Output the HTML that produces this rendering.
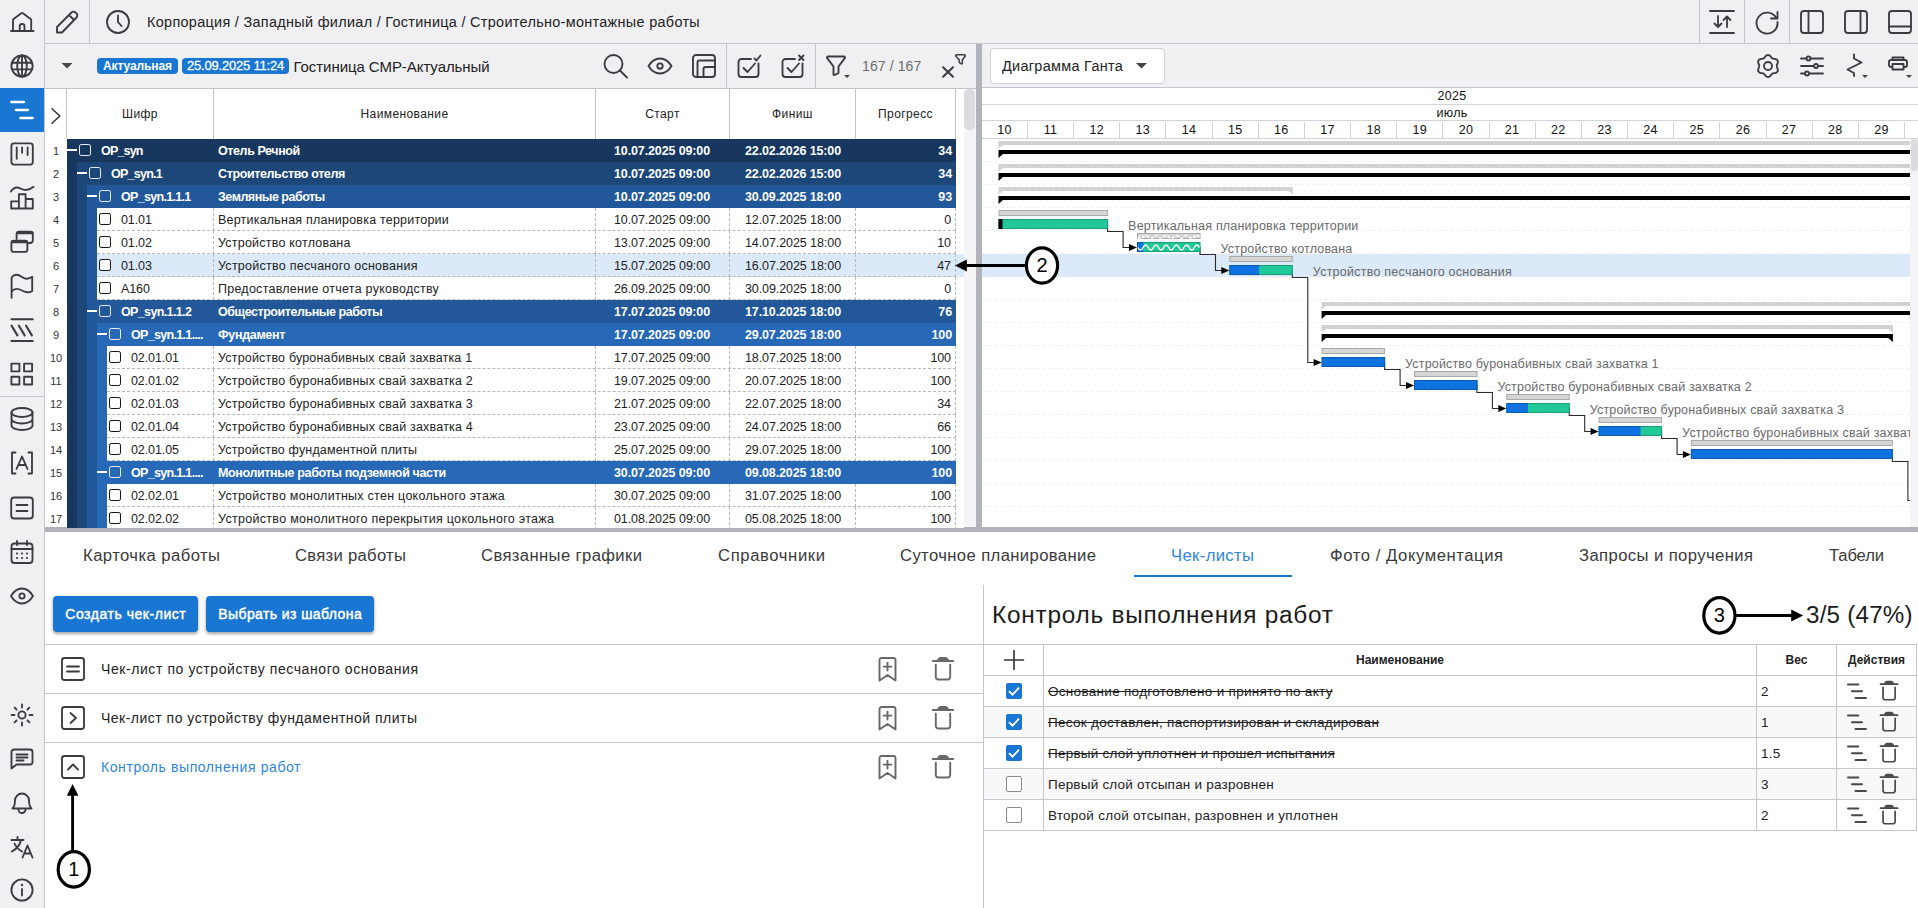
<!DOCTYPE html>
<html lang="ru"><head><meta charset="utf-8"><title>Gantt</title><style>
*{box-sizing:border-box}
html,body{margin:0;padding:0}
body{width:1918px;height:908px;overflow:hidden;background:#fff;font-family:"Liberation Sans",sans-serif;color:#222;position:relative}
.abs{position:absolute}
.t{position:absolute;white-space:nowrap;line-height:1}
svg{position:absolute;overflow:visible}
.ic{fill:none;stroke:#3b3b40;stroke-width:1.85;stroke-linecap:round;stroke-linejoin:round}

.gh{position:absolute;top:89px;height:50px;background:#fff;border-right:1px solid #c4c4cc;font-size:12px;letter-spacing:.4px;color:#222;text-align:center;line-height:51px}
.gr{position:absolute;left:45px;width:919px;height:23px}
.gr .t{top:0;line-height:24px}
.rn{position:absolute;left:0;width:22px;text-align:center;font-size:11px;color:#333;line-height:25px;top:0}
.st{font-weight:700;color:#fff;font-size:12.5px;letter-spacing:-.38px}
.tt{font-size:12.5px;letter-spacing:.2px;color:#222}
.cd{font-size:12.5px;letter-spacing:-.1px;color:#222}
.dt{font-size:12.5px;letter-spacing:-.08px;color:#222}
.dtb{font-weight:700;color:#fff;font-size:12.5px;letter-spacing:-.13px}
.cb{position:absolute;top:4.500px;width:12px;height:12px;border:1.600px solid #151515;border-radius:2.200px;background:#fff}
.cbw{position:absolute;top:5px;width:12px;height:12px;border:1.500px solid #e8edf5;border-radius:2.200px}
.mn{position:absolute;top:9.500px;width:10px;height:2px;background:#fff}
.vd{position:absolute;top:0;width:0;height:23px;border-left:1px dashed #b9b9b9}

.gl{position:absolute;white-space:nowrap;font-size:12.5px;letter-spacing:.2px;color:#6a6a6a;line-height:23px}
.gd{position:absolute;top:122px;height:16px;border-right:1px solid #d3d3d8;font-size:12.5px;letter-spacing:.3px;text-align:center;line-height:17px;color:#111}

.tab{position:absolute;top:533px;height:46px;line-height:46px;font-size:16px;color:#3a3a3a;white-space:nowrap;transform:scaleX(1.04);transform-origin:0 0}
.btn{position:absolute;top:596px;height:36px;border-radius:4px;background:#1976d2;color:#fff;font-size:14px;font-weight:400;-webkit-text-stroke:.450px #fff;line-height:36px;text-align:center;white-space:nowrap;box-shadow:0 2px 3px rgba(0,0,0,.28),0 1px 5px rgba(0,0,0,.12)}
.cli{position:absolute;left:101px;font-size:14px;letter-spacing:.56px;line-height:20px;color:#222;white-space:nowrap}
.hl{position:absolute;height:1px;background:#c6c6cc}
.ct{position:absolute;font-size:13.5px;letter-spacing:.3px;line-height:31px;color:#222;white-space:nowrap}
.cth{position:absolute;font-size:12px;font-weight:700;line-height:31px;color:#222;text-align:center;white-space:nowrap}
.gi{fill:none;stroke:#686868;stroke-width:1.900;stroke-linecap:round;stroke-linejoin:round}
.gi2{fill:none;stroke:#47474c;stroke-width:2;stroke-linecap:round;stroke-linejoin:round}
</style></head>
<body>
<div class="abs" style="left:0;top:0;width:44px;height:908px;background:#f0f0f2"></div>
<div class="abs" style="left:44px;top:0;width:1px;height:908px;background:#c4c4cc"></div>
<div class="abs" style="left:0;top:88px;width:44px;height:44px;background:#1976d2"></div>
<div class="abs" style="left:0;top:396px;width:44px;height:1px;background:#c4c4cc"></div>
<div class="abs" style="left:45px;top:0;width:1873px;height:43px;background:#f0f0f2"></div>
<div class="abs" style="left:45px;top:43px;width:1873px;height:1px;background:#c4c4cc"></div>
<div class="abs" style="left:45px;top:44px;width:1873px;height:44px;background:#f0f0f2"></div>
<div class="abs" style="left:45px;top:88px;width:1873px;height:1px;background:#c4c4cc"></div>
<div class="abs" style="left:89px;top:0;width:1px;height:43px;background:#c4c4cc"></div>
<div class="abs" style="left:1699px;top:0;width:1px;height:43px;background:#c4c4cc"></div>
<div class="abs" style="left:1744px;top:0;width:1px;height:43px;background:#c4c4cc"></div>
<div class="abs" style="left:1789px;top:0;width:1px;height:43px;background:#c4c4cc"></div>
<div class="abs" style="left:726px;top:44px;width:1px;height:44px;background:#c4c4cc"></div>
<div class="abs" style="left:815px;top:44px;width:1px;height:44px;background:#c4c4cc"></div>
<div class="abs" style="left:976px;top:44px;width:6px;height:483px;background:#b1b2ba"></div>
<div class="abs" style="left:45px;top:526.500px;width:1873px;height:5.800px;background:#b1b2ba"></div>
<svg class="ic" style="left:10px;top:10px" width="24" height="24" viewBox="0 0 24 24" ><path d="M1 21H23.5M3 21V10.2a1.500 1.500 0 0 1 .600-1.200L11.300 3.200a1.300 1.300 0 0 1 1.600 0L20.600 9a1.500 1.500 0 0 1 .600 1.200V21M9.700 21V16.400a2.400 2.400 0 0 1 4.800 0V21"/></svg>
<svg class="ic" style="left:10px;top:53.599999999999994px" width="24" height="24" viewBox="0 0 24 24" ><circle cx="12" cy="12" r="10.6"/><ellipse cx="12" cy="12" rx="4.8" ry="10.6"/><path d="M12 1.4V22.6M2.200 8.700H21.800M2.200 15.300H21.800"/></svg>
<svg class="ic" style="left:10px;top:98px" width="24" height="24" viewBox="0 0 24 24" ><path d="M1.300 4H14M5.800 12H18M10.300 20H22.700" stroke="#fff" stroke-width="2.300"/></svg>
<svg class="ic" style="left:10px;top:142px" width="24" height="24" viewBox="0 0 24 24" ><rect x="1.400" y="1.400" width="21.400" height="21.200" rx="2.500"/><path d="M6.700 5.400V16.700M12.100 5.400V10.800M17.600 5.400V13"/></svg>
<svg class="ic" style="left:10px;top:186px" width="24" height="24" viewBox="0 0 24 24" ><path d="M0.800 5.500C3.500 1.500 7 0.500 10.500 2.500S18 5.500 23.500 0.800M1.200 22.500V15.400H8.900V22.500M8.900 15.400V8.200H15.600V22.500M15.600 13H22.800V22.500H1.200"/></svg>
<svg class="ic" style="left:10px;top:230px" width="24" height="24" viewBox="0 0 24 24" ><path d="M6.600 9V4.100a2.500 2.500 0 0 1 2.500-2.500H20.300a2.500 2.500 0 0 1 2.500 2.500V10.500a2.500 2.500 0 0 1-2.500 2.500H18.500"/><path d="M7.500 2.700H22" stroke-width="3"/><rect x="1.400" y="10.700" width="16" height="11.200" rx="2.500"/><path d="M2.300 11.800H16.500" stroke-width="3"/></svg>
<svg class="ic" style="left:10px;top:274px" width="24" height="24" viewBox="0 0 24 24" ><path d="M1.600 23.700V3.500C4.500 -0.500 8.500 0.500 12 3S18.500 5.500 22.200 2.800V16.900C18.500 19.500 15.500 18.500 12 16.500S4.500 14 1.600 17.600"/></svg>
<svg class="ic" style="left:10px;top:318px" width="24" height="24" viewBox="0 0 24 24" ><path d="M1.500 1.200H22.700M1.500 23H22.700M1.600 7.700L7.400 17.400M8.900 7.700L14.700 17.400M16.100 7.700L21.900 17.400" stroke-width="2.100"/></svg>
<svg class="ic" style="left:10px;top:362px" width="24" height="24" viewBox="0 0 24 24" ><rect x="1.400" y="1.600" width="8" height="7.800"/><rect x="14.100" y="1.600" width="8" height="7.800"/><rect x="1.400" y="14.700" width="8" height="7.800"/><rect x="14.100" y="14.700" width="8" height="7.800"/></svg>
<svg class="ic" style="left:10px;top:407px" width="24" height="24" viewBox="0 0 24 24" ><ellipse cx="12" cy="5.500" rx="10.500" ry="4.500"/><path d="M1.500 5.500V18.500c0 2.500 4.700 4.500 10.500 4.500s10.500-2 10.500-4.500V5.500M1.500 12c0 2.500 4.700 4.500 10.500 4.500s10.500-2 10.500-4.500"/></svg>
<svg class="ic" style="left:10px;top:451px" width="24" height="24" viewBox="0 0 24 24" ><path d="M5.500 1.500H2V22.500H5.500M18.500 1.500H22V22.500H18.500M6.500 18L12 5.500L17.500 18M8.300 14H15.700"/></svg>
<svg class="ic" style="left:10px;top:496px" width="24" height="24" viewBox="0 0 24 24" ><rect x="1.200" y="1.500" width="21.600" height="21" rx="3"/><path d="M6.500 9H17.500M6.500 15H17.500"/></svg>
<svg class="ic" style="left:10px;top:540px" width="24" height="24" viewBox="0 0 24 24" ><rect x="1.500" y="3.500" width="21" height="19.500" rx="3"/><path d="M1.500 9H22.500M7 1V5M17 1V5" /><path d="M7 13.500h.01M12 13.500h.01M17 13.500h.01M7 18h.01M12 18h.01M17 18h.01" stroke-width="2.200"/></svg>
<svg class="ic" style="left:10px;top:584px" width="24" height="24" viewBox="0 0 24 24" ><path d="M1 12c3-5 6.500-7.500 11-7.500s8 2.500 11 7.500c-3 5-6.500 7.500-11 7.500S4 17 1 12z"/><circle cx="12" cy="12" r="2.600"/></svg>
<svg class="ic" style="left:10px;top:703px" width="24" height="24" viewBox="0 0 24 24" ><circle cx="12" cy="12" r="3.600"/><path d="M12 1.500V4.500M12 19.500V22.500M1.500 12H4.500M19.500 12H22.500M4.600 4.600L6.500 6.500M17.500 17.500L19.400 19.400M4.600 19.400L6.500 17.500M17.500 6.500L19.400 4.600"/></svg>
<svg class="ic" style="left:10px;top:747px" width="24" height="24" viewBox="0 0 24 24" ><path d="M4 2.500H20a2.500 2.500 0 0 1 2.500 2.500V15a2.500 2.500 0 0 1-2.500 2.500H6.500L1.500 21.500V5A2.500 2.500 0 0 1 4 2.500z"/><path d="M6.500 7.500H17.500M6.500 10.500H17.500M6.500 13.500H13.500"/></svg>
<svg class="ic" style="left:10px;top:791px" width="24" height="24" viewBox="0 0 24 24" ><path d="M2.500 17.500c2-2 2.500-4 2.500-8a7 7 0 0 1 14 0c0 4 .500 6 2.500 8zM8.500 18.500a3.500 3.500 0 0 0 7 0"/></svg>
<svg class="ic" style="left:10px;top:835px" width="24" height="24" viewBox="0 0 24 24" ><path d="M1.500 5H13.500M7.500 2V5M11 5c-1 5-4.500 9-9 11.500M4.500 8.500c1.500 3.500 4 6 7.500 8M12.500 22.500L17.500 10.500L22.500 22.500M14.200 18.500H20.800" stroke-width="1.900"/></svg>
<svg class="ic" style="left:10px;top:878px" width="24" height="24" viewBox="0 0 24 24" ><circle cx="12" cy="12" r="10.600"/><path d="M12 11V17.500"/><path d="M12 7h.01" stroke-width="2.400"/></svg>
<svg class="ic" style="left:55px;top:10px" width="24" height="24" viewBox="0 0 24 24" ><path d="M2 22.500V17L16.500 2.500a2.800 2.800 0 0 1 4 0l1 1a2.800 2.800 0 0 1 0 4L7 22.500zM14 5L19 10"/></svg>
<svg class="ic" style="left:106px;top:10px" width="24" height="24" viewBox="0 0 24 24" ><circle cx="12" cy="12" r="11"/><path d="M12 5.500V12L15.500 16"/></svg>
<svg class="ic" style="left:1710px;top:10px" width="24" height="24" viewBox="0 0 24 24" ><path d="M0 1H24M0 23H24M8 6V17M4.500 13.500L8 17L11.500 13.500M17 17V6.500M13.500 10L17 6.500L20.500 10" stroke-width="1.800"/></svg>
<svg class="ic" style="left:1755px;top:10px" width="24" height="24" viewBox="0 0 24 24" ><path d="M21.500 8.500A10.500 10.500 0 1 0 22.500 12M22.500 2V8.500H16"/></svg>
<svg class="ic" style="left:1800px;top:10px" width="24" height="24" viewBox="0 0 24 24" ><rect x="1" y="1" width="22" height="22" rx="3"/><path d="M8.500 1V23"/></svg>
<svg class="ic" style="left:1844px;top:10px" width="24" height="24" viewBox="0 0 24 24" ><rect x="1" y="1" width="22" height="22" rx="3"/><path d="M16.500 1V23"/></svg>
<svg class="ic" style="left:1888px;top:10px" width="24" height="24" viewBox="0 0 24 24" ><rect x="1" y="1" width="22" height="22" rx="3"/><path d="M1 16.500H23"/></svg>
<svg style="left:61px;top:63px" width="12" height="6" viewBox="0 0 12 6"><path d="M0.500 0H11.500L6 5.500z" fill="#444"/></svg>
<svg class="ic" style="left:603px;top:54px" width="24" height="24" viewBox="0 0 24 24" ><circle cx="10.500" cy="10" r="9"/><path d="M17 16.500L24 23.500"/></svg>
<svg class="ic" style="left:648px;top:54px" width="24" height="24" viewBox="0 0 24 24" ><path d="M0.500 12c3-5 6.500-7.500 11.500-7.500s8.500 2.500 11.500 7.500c-3 5-6.500 7.500-11.500 7.500S3.500 17 0.500 12z"/><circle cx="12" cy="12" r="2.700"/></svg>
<svg class="ic" style="left:692px;top:54px" width="24" height="24" viewBox="0 0 24 24" ><rect x="1" y="1" width="22" height="22" rx="3" stroke-width="1.900"/><path d="M5.500 23V8.500a2 2 0 0 1 2-2H23M11.500 23V15a2 2 0 0 1 2-2H23" stroke-width="1.900"/></svg>
<svg class="ic" style="left:737px;top:54px" width="24" height="24" viewBox="0 0 24 24" ><path d="M21.500 9.500V20a3 3 0 0 1-3 3H4.500a3 3 0 0 1-3-3V8a3 3 0 0 1 3-3H14M6.500 14L10.500 18L18 9.500M17.500 4.500L19.500 6.500L23.500 1.500"/></svg>
<svg class="ic" style="left:781px;top:54px" width="24" height="24" viewBox="0 0 24 24" ><path d="M21.500 9.500V20a3 3 0 0 1-3 3H4.500a3 3 0 0 1-3-3V8a3 3 0 0 1 3-3H14M6.500 14L10.500 18L18 9.500M18 1.500L22.500 6M22.500 1.500L18 6"/></svg>
<svg class="ic" style="left:825px;top:54px" width="24" height="24" viewBox="0 0 24 24" ><path d="M2 3.500a1 1 0 0 1 1-1H19a1 1 0 0 1 .800 1.600L13.500 12.500V18.500a1 1 0 0 1-.500.900L9.500 21a.700.700 0 0 1-1-.600V12.500L2.200 4.100z" stroke-width="1.900"/><path d="M19 21h6l-3 3z" fill="#444" stroke="none"/></svg>
<svg class="ic" style="left:942px;top:52px" width="26" height="28" viewBox="0 0 26 28" ><path d="M1.100 15.300L11 24.700M11 15.300L1.100 24.700" stroke-width="2"/><path d="M14.600 2.800H22.400a.900.900 0 0 1 .700 1.500L20.300 8V11.200a.700.700 0 0 1-1 .600L17.300 10.700V8L13.900 4.300a.900.900 0 0 1 .700-1.500z" stroke-width="1.500"/></svg>
<svg class="ic" style="left:1756px;top:54px" width="24" height="24" viewBox="0 0 24 24" ><path d="M20.80 12.00 L20.84 12.46 L20.96 12.94 L21.14 13.45 L21.35 13.99 L21.56 14.56 L21.74 15.16 L21.85 15.78 L21.86 16.39 L21.75 16.97 L21.53 17.50 L21.18 17.96 L20.73 18.34 L20.20 18.64 L19.61 18.85 L19.00 19.00 L18.40 19.10 L17.82 19.19 L17.30 19.29 L16.82 19.43 L16.40 19.62 L16.02 19.89 L15.66 20.23 L15.32 20.64 L14.95 21.09 L14.56 21.56 L14.13 22.02 L13.65 22.42 L13.13 22.73 L12.57 22.93 L12.00 23.00 L11.43 22.93 L10.87 22.73 L10.35 22.42 L9.87 22.02 L9.44 21.56 L9.05 21.09 L8.68 20.64 L8.34 20.23 L7.98 19.89 L7.60 19.62 L7.18 19.43 L6.70 19.29 L6.18 19.19 L5.60 19.10 L5.00 19.00 L4.39 18.85 L3.80 18.64 L3.27 18.34 L2.82 17.96 L2.47 17.50 L2.25 16.97 L2.14 16.39 L2.15 15.78 L2.26 15.16 L2.44 14.56 L2.65 13.99 L2.86 13.45 L3.04 12.94 L3.16 12.46 L3.20 12.00 L3.16 11.54 L3.04 11.06 L2.86 10.55 L2.65 10.01 L2.44 9.44 L2.26 8.84 L2.15 8.22 L2.14 7.61 L2.25 7.03 L2.47 6.50 L2.82 6.04 L3.27 5.66 L3.80 5.36 L4.39 5.15 L5.00 5.00 L5.60 4.90 L6.18 4.81 L6.70 4.71 L7.18 4.57 L7.60 4.38 L7.98 4.11 L8.34 3.77 L8.68 3.36 L9.05 2.91 L9.44 2.44 L9.87 1.98 L10.35 1.58 L10.87 1.27 L11.43 1.07 L12.00 1.00 L12.57 1.07 L13.13 1.27 L13.65 1.58 L14.13 1.98 L14.56 2.44 L14.95 2.91 L15.32 3.36 L15.66 3.77 L16.02 4.11 L16.40 4.38 L16.82 4.57 L17.30 4.71 L17.82 4.81 L18.40 4.90 L19.00 5.00 L19.61 5.15 L20.20 5.36 L20.73 5.66 L21.18 6.04 L21.53 6.50 L21.75 7.03 L21.86 7.61 L21.85 8.22 L21.74 8.84 L21.56 9.44 L21.35 10.01 L21.14 10.55 L20.96 11.06 L20.84 11.54z"/><circle cx="12" cy="12" r="4"/></svg>
<svg class="ic" style="left:1800px;top:54px" width="24" height="24" viewBox="0 0 24 24" ><path d="M1 4.500H6.500M10.500 4.500H23M1 12H14M18 12H23M1 19.500H5M9 19.500H23"/><circle cx="8.500" cy="4.500" r="2"/><circle cx="16" cy="12" r="2"/><circle cx="7" cy="19.500" r="2"/></svg>
<svg class="ic" style="left:1844px;top:54px" width="24" height="24" viewBox="0 0 24 24" ><path d="M10 0.500V4.500L17.500 8.500L3.500 15.500L10 19V22"/><path d="M18 21h6l-3 3z" fill="#444" stroke="none"/></svg>
<svg class="ic" style="left:1888px;top:54px" width="24" height="24" viewBox="0 0 24 24" ><path d="M4.500 6V3.500H15.500V6M4.500 13H3a2 2 0 0 1-2-2V8a2 2 0 0 1 2-2H17a2 2 0 0 1 2 2v3a2 2 0 0 1-2 2H15.500M4.500 10H15.500V15.500H4.500z" stroke-width="1.900"/><path d="M18 21h6l-3 3z" fill="#444" stroke="none"/></svg>
<div class="t" style="left:146.500px;top:13px;font-size:14px;letter-spacing:0.303px;line-height:18px;color:#222;transform:scaleX(1.03);transform-origin:0 0">Корпорация / Западный филиал / Гостиница / Строительно-монтажные работы</div>
<div class="abs" style="left:97px;top:58px;width:81px;height:16px;background:#1976d2;border-radius:4px;color:#fff;font-size:12px;font-weight:700;letter-spacing:-.100px;line-height:16px;text-align:center">Актуальная</div>
<div class="abs" style="left:182px;top:58px;width:107px;height:16px;background:#1976d2;border-radius:4px;color:#fff;font-size:13px;letter-spacing:-.200px;-webkit-text-stroke:.300px #fff;line-height:16px;text-align:center;white-space:nowrap">25.09.2025 11:24</div>
<div class="t" style="left:293.500px;top:58px;font-size:15px;letter-spacing:-0.061px;line-height:18px;color:#222">Гостиница СМР-Актуальный</div>
<div class="t" style="left:862px;top:57px;font-size:14px;letter-spacing:.100px;line-height:18px;color:#6b6b6b">167 / 167</div>
<div class="abs" style="left:990px;top:48px;width:175px;height:36px;background:#fff;border:1px solid #cfcfd4;border-radius:4px"></div>
<div class="t" style="left:1002px;top:57px;font-size:14px;letter-spacing:0.302px;line-height:18px;color:#222;transform:scaleX(1.03);transform-origin:0 0">Диаграмма Ганта</div>
<svg style="left:1136px;top:63px" width="11" height="6" viewBox="0 0 11 6"><path d="M0 0H11L5.500 5.500z" fill="#444"/></svg>
<div class="abs" style="left:45px;top:89px;width:931px;height:50px;background:#fff"></div>
<div class="gh" style="left:45px;width:22px"></div>
<div class="gh" style="left:67px;width:147px">Шифр</div>
<div class="gh" style="left:214px;width:382px">Наименование</div>
<div class="gh" style="left:596px;width:134px">Старт</div>
<div class="gh" style="left:730px;width:126px">Финиш</div>
<div class="gh" style="left:856px;width:100px">Прогресс</div>
<svg style="left:49px;top:105px" width="14" height="22" viewBox="0 0 14 22"><path d="M3 3.700 L10.800 11 L3 18.300" fill="none" stroke="#333" stroke-width="1.5" stroke-linecap="round" stroke-linejoin="round"/></svg>
<div class="abs" style="left:964px;top:89px;width:12px;height:438px;background:#f5f5f7"></div>
<div class="abs" style="left:964px;top:89px;width:11px;height:41px;background:#dcdcde;border-radius:5px"></div>
<div class="gr" style="top:139px;height:23px;overflow:hidden"><div class="rn">1</div><div class="abs" style="left:22px;top:0;width:889px;height:23px;background:#17375f"></div><div class="mn" style="left:22px"></div><div class="cbw" style="left:34px"></div><div class="t st" style="left:56px;letter-spacing:-0.812px">OP_syn</div><div class="t st" style="left:173px;letter-spacing:-0.4px">Отель Речной</div><div class="t dtb" style="left:550px;width:134px;text-align:center">10.07.2025 09:00</div><div class="t dtb" style="left:685px;width:126px;text-align:center">22.02.2026 15:00</div><div class="t dtb" style="left:811px;width:96px;text-align:right">34</div></div>
<div class="gr" style="top:162px;height:23px;overflow:hidden"><div class="rn">2</div><div class="abs" style="left:22px;top:0;width:10px;height:23px;background:#17375f"></div><div class="abs" style="left:32px;top:0;width:879px;height:23px;background:#1d4679"></div><div class="mn" style="left:32px"></div><div class="cbw" style="left:44px"></div><div class="t st" style="left:66px;letter-spacing:-0.741px">OP_syn.1</div><div class="t st" style="left:173px;letter-spacing:-0.38px">Строительство отеля</div><div class="t dtb" style="left:550px;width:134px;text-align:center">10.07.2025 09:00</div><div class="t dtb" style="left:685px;width:126px;text-align:center">22.02.2026 15:00</div><div class="t dtb" style="left:811px;width:96px;text-align:right">34</div></div>
<div class="gr" style="top:185px;height:23px;overflow:hidden"><div class="rn">3</div><div class="abs" style="left:22px;top:0;width:10px;height:23px;background:#17375f"></div><div class="abs" style="left:32px;top:0;width:10px;height:23px;background:#1d4679"></div><div class="abs" style="left:42px;top:0;width:869px;height:23px;background:#22579a"></div><div class="mn" style="left:42px"></div><div class="cbw" style="left:54px"></div><div class="t st" style="left:76px;letter-spacing:-0.693px">OP_syn.1.1.1</div><div class="t st" style="left:173px;letter-spacing:-0.492px">Земляные работы</div><div class="t dtb" style="left:550px;width:134px;text-align:center">10.07.2025 09:00</div><div class="t dtb" style="left:685px;width:126px;text-align:center">30.09.2025 18:00</div><div class="t dtb" style="left:811px;width:96px;text-align:right">93</div></div>
<div class="gr" style="top:208px;height:23px;overflow:hidden"><div class="rn">4</div><div class="abs" style="left:22px;top:0;width:10px;height:23px;background:#17375f"></div><div class="abs" style="left:32px;top:0;width:10px;height:23px;background:#1d4679"></div><div class="abs" style="left:42px;top:0;width:10px;height:23px;background:#22579a"></div><div class="abs" style="left:52px;top:0;width:867px;height:23px;background:#fff"></div><div class="abs" style="left:52px;top:22px;width:859px;height:0;border-bottom:1px dashed #b9b9b9"></div><div class="vd" style="left:168px"></div><div class="vd" style="left:550px"></div><div class="vd" style="left:684px"></div><div class="vd" style="left:810px"></div><div class="vd" style="left:910px"></div><div class="cb" style="left:54px"></div><div class="t cd" style="left:76px">01.01</div><div class="t tt" style="left:173px;letter-spacing:0.213px">Вертикальная планировка территории</div><div class="t dt" style="left:550px;width:134px;text-align:center">10.07.2025 09:00</div><div class="t dt" style="left:685px;width:126px;text-align:center">12.07.2025 18:00</div><div class="t dt" style="left:811px;width:95px;text-align:right">0</div></div>
<div class="gr" style="top:231px;height:23px;overflow:hidden"><div class="rn">5</div><div class="abs" style="left:22px;top:0;width:10px;height:23px;background:#17375f"></div><div class="abs" style="left:32px;top:0;width:10px;height:23px;background:#1d4679"></div><div class="abs" style="left:42px;top:0;width:10px;height:23px;background:#22579a"></div><div class="abs" style="left:52px;top:0;width:867px;height:23px;background:#fff"></div><div class="abs" style="left:52px;top:22px;width:859px;height:0;border-bottom:1px dashed #b9b9b9"></div><div class="vd" style="left:168px"></div><div class="vd" style="left:550px"></div><div class="vd" style="left:684px"></div><div class="vd" style="left:810px"></div><div class="vd" style="left:910px"></div><div class="cb" style="left:54px"></div><div class="t cd" style="left:76px">01.02</div><div class="t tt" style="left:173px;letter-spacing:0.216px">Устройство котлована</div><div class="t dt" style="left:550px;width:134px;text-align:center">13.07.2025 09:00</div><div class="t dt" style="left:685px;width:126px;text-align:center">14.07.2025 18:00</div><div class="t dt" style="left:811px;width:95px;text-align:right">10</div></div>
<div class="gr" style="top:254px;height:23px;overflow:hidden"><div class="rn">6</div><div class="abs" style="left:22px;top:0;width:10px;height:23px;background:#17375f"></div><div class="abs" style="left:32px;top:0;width:10px;height:23px;background:#1d4679"></div><div class="abs" style="left:42px;top:0;width:10px;height:23px;background:#22579a"></div><div class="abs" style="left:52px;top:0;width:867px;height:23px;background:#dce9f8"></div><div class="abs" style="left:52px;top:22px;width:859px;height:0;border-bottom:1px dashed #b9b9b9"></div><div class="vd" style="left:168px"></div><div class="vd" style="left:550px"></div><div class="vd" style="left:684px"></div><div class="vd" style="left:810px"></div><div class="vd" style="left:910px"></div><div class="cb" style="left:54px"></div><div class="t cd" style="left:76px">01.03</div><div class="t tt" style="left:173px;letter-spacing:0.262px">Устройство песчаного основания</div><div class="t dt" style="left:550px;width:134px;text-align:center">15.07.2025 09:00</div><div class="t dt" style="left:685px;width:126px;text-align:center">16.07.2025 18:00</div><div class="t dt" style="left:811px;width:95px;text-align:right">47</div></div>
<div class="gr" style="top:277px;height:23px;overflow:hidden"><div class="rn">7</div><div class="abs" style="left:22px;top:0;width:10px;height:23px;background:#17375f"></div><div class="abs" style="left:32px;top:0;width:10px;height:23px;background:#1d4679"></div><div class="abs" style="left:42px;top:0;width:10px;height:23px;background:#22579a"></div><div class="abs" style="left:52px;top:0;width:867px;height:23px;background:#fff"></div><div class="abs" style="left:52px;top:22px;width:859px;height:0;border-bottom:1px dashed #b9b9b9"></div><div class="vd" style="left:168px"></div><div class="vd" style="left:550px"></div><div class="vd" style="left:684px"></div><div class="vd" style="left:810px"></div><div class="vd" style="left:910px"></div><div class="cb" style="left:54px"></div><div class="t cd" style="left:76px">A160</div><div class="t tt" style="left:173px;letter-spacing:0.253px">Предоставление отчета руководству</div><div class="t dt" style="left:550px;width:134px;text-align:center">26.09.2025 09:00</div><div class="t dt" style="left:685px;width:126px;text-align:center">30.09.2025 18:00</div><div class="t dt" style="left:811px;width:95px;text-align:right">0</div></div>
<div class="gr" style="top:300px;height:23px;overflow:hidden"><div class="rn">8</div><div class="abs" style="left:22px;top:0;width:10px;height:23px;background:#17375f"></div><div class="abs" style="left:32px;top:0;width:10px;height:23px;background:#1d4679"></div><div class="abs" style="left:42px;top:0;width:869px;height:23px;background:#22579a"></div><div class="mn" style="left:42px"></div><div class="cbw" style="left:54px"></div><div class="t st" style="left:76px;letter-spacing:-0.63px">OP_syn.1.1.2</div><div class="t st" style="left:173px;letter-spacing:-0.45px">Общестроительные работы</div><div class="t dtb" style="left:550px;width:134px;text-align:center">17.07.2025 09:00</div><div class="t dtb" style="left:685px;width:126px;text-align:center">17.10.2025 18:00</div><div class="t dtb" style="left:811px;width:96px;text-align:right">76</div></div>
<div class="gr" style="top:323px;height:23px;overflow:hidden"><div class="rn">9</div><div class="abs" style="left:22px;top:0;width:10px;height:23px;background:#17375f"></div><div class="abs" style="left:32px;top:0;width:10px;height:23px;background:#1d4679"></div><div class="abs" style="left:42px;top:0;width:10px;height:23px;background:#22579a"></div><div class="abs" style="left:52px;top:0;width:859px;height:23px;background:#2768b7"></div><div class="mn" style="left:52px"></div><div class="cbw" style="left:64px"></div><div class="t st" style="left:86px;letter-spacing:-0.677px">OP_syn.1.1....</div><div class="t st" style="left:173px;letter-spacing:-0.33px">Фундамент</div><div class="t dtb" style="left:550px;width:134px;text-align:center">17.07.2025 09:00</div><div class="t dtb" style="left:685px;width:126px;text-align:center">29.07.2025 18:00</div><div class="t dtb" style="left:811px;width:96px;text-align:right">100</div></div>
<div class="gr" style="top:346px;height:23px;overflow:hidden"><div class="rn">10</div><div class="abs" style="left:22px;top:0;width:10px;height:23px;background:#17375f"></div><div class="abs" style="left:32px;top:0;width:10px;height:23px;background:#1d4679"></div><div class="abs" style="left:42px;top:0;width:10px;height:23px;background:#22579a"></div><div class="abs" style="left:52px;top:0;width:10px;height:23px;background:#2768b7"></div><div class="abs" style="left:62px;top:0;width:857px;height:23px;background:#fff"></div><div class="abs" style="left:62px;top:22px;width:849px;height:0;border-bottom:1px dashed #b9b9b9"></div><div class="vd" style="left:168px"></div><div class="vd" style="left:550px"></div><div class="vd" style="left:684px"></div><div class="vd" style="left:810px"></div><div class="vd" style="left:910px"></div><div class="cb" style="left:64px"></div><div class="t cd" style="left:86px">02.01.01</div><div class="t tt" style="left:173px;letter-spacing:0.183px">Устройство буронабивных свай захватка 1</div><div class="t dt" style="left:550px;width:134px;text-align:center">17.07.2025 09:00</div><div class="t dt" style="left:685px;width:126px;text-align:center">18.07.2025 18:00</div><div class="t dt" style="left:811px;width:95px;text-align:right">100</div></div>
<div class="gr" style="top:369px;height:23px;overflow:hidden"><div class="rn">11</div><div class="abs" style="left:22px;top:0;width:10px;height:23px;background:#17375f"></div><div class="abs" style="left:32px;top:0;width:10px;height:23px;background:#1d4679"></div><div class="abs" style="left:42px;top:0;width:10px;height:23px;background:#22579a"></div><div class="abs" style="left:52px;top:0;width:10px;height:23px;background:#2768b7"></div><div class="abs" style="left:62px;top:0;width:857px;height:23px;background:#fff"></div><div class="abs" style="left:62px;top:22px;width:849px;height:0;border-bottom:1px dashed #b9b9b9"></div><div class="vd" style="left:168px"></div><div class="vd" style="left:550px"></div><div class="vd" style="left:684px"></div><div class="vd" style="left:810px"></div><div class="vd" style="left:910px"></div><div class="cb" style="left:64px"></div><div class="t cd" style="left:86px">02.01.02</div><div class="t tt" style="left:173px;letter-spacing:0.202px">Устройство буронабивных свай захватка 2</div><div class="t dt" style="left:550px;width:134px;text-align:center">19.07.2025 09:00</div><div class="t dt" style="left:685px;width:126px;text-align:center">20.07.2025 18:00</div><div class="t dt" style="left:811px;width:95px;text-align:right">100</div></div>
<div class="gr" style="top:392px;height:23px;overflow:hidden"><div class="rn">12</div><div class="abs" style="left:22px;top:0;width:10px;height:23px;background:#17375f"></div><div class="abs" style="left:32px;top:0;width:10px;height:23px;background:#1d4679"></div><div class="abs" style="left:42px;top:0;width:10px;height:23px;background:#22579a"></div><div class="abs" style="left:52px;top:0;width:10px;height:23px;background:#2768b7"></div><div class="abs" style="left:62px;top:0;width:857px;height:23px;background:#fff"></div><div class="abs" style="left:62px;top:22px;width:849px;height:0;border-bottom:1px dashed #b9b9b9"></div><div class="vd" style="left:168px"></div><div class="vd" style="left:550px"></div><div class="vd" style="left:684px"></div><div class="vd" style="left:810px"></div><div class="vd" style="left:910px"></div><div class="cb" style="left:64px"></div><div class="t cd" style="left:86px">02.01.03</div><div class="t tt" style="left:173px;letter-spacing:0.202px">Устройство буронабивных свай захватка 3</div><div class="t dt" style="left:550px;width:134px;text-align:center">21.07.2025 09:00</div><div class="t dt" style="left:685px;width:126px;text-align:center">22.07.2025 18:00</div><div class="t dt" style="left:811px;width:95px;text-align:right">34</div></div>
<div class="gr" style="top:415px;height:23px;overflow:hidden"><div class="rn">13</div><div class="abs" style="left:22px;top:0;width:10px;height:23px;background:#17375f"></div><div class="abs" style="left:32px;top:0;width:10px;height:23px;background:#1d4679"></div><div class="abs" style="left:42px;top:0;width:10px;height:23px;background:#22579a"></div><div class="abs" style="left:52px;top:0;width:10px;height:23px;background:#2768b7"></div><div class="abs" style="left:62px;top:0;width:857px;height:23px;background:#fff"></div><div class="abs" style="left:62px;top:22px;width:849px;height:0;border-bottom:1px dashed #b9b9b9"></div><div class="vd" style="left:168px"></div><div class="vd" style="left:550px"></div><div class="vd" style="left:684px"></div><div class="vd" style="left:810px"></div><div class="vd" style="left:910px"></div><div class="cb" style="left:64px"></div><div class="t cd" style="left:86px">02.01.04</div><div class="t tt" style="left:173px;letter-spacing:0.202px">Устройство буронабивных свай захватка 4</div><div class="t dt" style="left:550px;width:134px;text-align:center">23.07.2025 09:00</div><div class="t dt" style="left:685px;width:126px;text-align:center">24.07.2025 18:00</div><div class="t dt" style="left:811px;width:95px;text-align:right">66</div></div>
<div class="gr" style="top:438px;height:23px;overflow:hidden"><div class="rn">14</div><div class="abs" style="left:22px;top:0;width:10px;height:23px;background:#17375f"></div><div class="abs" style="left:32px;top:0;width:10px;height:23px;background:#1d4679"></div><div class="abs" style="left:42px;top:0;width:10px;height:23px;background:#22579a"></div><div class="abs" style="left:52px;top:0;width:10px;height:23px;background:#2768b7"></div><div class="abs" style="left:62px;top:0;width:857px;height:23px;background:#fff"></div><div class="abs" style="left:62px;top:22px;width:849px;height:0;border-bottom:1px dashed #b9b9b9"></div><div class="vd" style="left:168px"></div><div class="vd" style="left:550px"></div><div class="vd" style="left:684px"></div><div class="vd" style="left:810px"></div><div class="vd" style="left:910px"></div><div class="cb" style="left:64px"></div><div class="t cd" style="left:86px">02.01.05</div><div class="t tt" style="left:173px;letter-spacing:0.159px">Устройство фундаментной плиты</div><div class="t dt" style="left:550px;width:134px;text-align:center">25.07.2025 09:00</div><div class="t dt" style="left:685px;width:126px;text-align:center">29.07.2025 18:00</div><div class="t dt" style="left:811px;width:95px;text-align:right">100</div></div>
<div class="gr" style="top:461px;height:23px;overflow:hidden"><div class="rn">15</div><div class="abs" style="left:22px;top:0;width:10px;height:23px;background:#17375f"></div><div class="abs" style="left:32px;top:0;width:10px;height:23px;background:#1d4679"></div><div class="abs" style="left:42px;top:0;width:10px;height:23px;background:#22579a"></div><div class="abs" style="left:52px;top:0;width:859px;height:23px;background:#2768b7"></div><div class="mn" style="left:52px"></div><div class="cbw" style="left:64px"></div><div class="t st" style="left:86px;letter-spacing:-0.677px">OP_syn.1.1....</div><div class="t st" style="left:173px;letter-spacing:-0.364px">Монолитные работы подземной части</div><div class="t dtb" style="left:550px;width:134px;text-align:center">30.07.2025 09:00</div><div class="t dtb" style="left:685px;width:126px;text-align:center">09.08.2025 18:00</div><div class="t dtb" style="left:811px;width:96px;text-align:right">100</div></div>
<div class="gr" style="top:484px;height:23px;overflow:hidden"><div class="rn">16</div><div class="abs" style="left:22px;top:0;width:10px;height:23px;background:#17375f"></div><div class="abs" style="left:32px;top:0;width:10px;height:23px;background:#1d4679"></div><div class="abs" style="left:42px;top:0;width:10px;height:23px;background:#22579a"></div><div class="abs" style="left:52px;top:0;width:10px;height:23px;background:#2768b7"></div><div class="abs" style="left:62px;top:0;width:857px;height:23px;background:#fff"></div><div class="abs" style="left:62px;top:22px;width:849px;height:0;border-bottom:1px dashed #b9b9b9"></div><div class="vd" style="left:168px"></div><div class="vd" style="left:550px"></div><div class="vd" style="left:684px"></div><div class="vd" style="left:810px"></div><div class="vd" style="left:910px"></div><div class="cb" style="left:64px"></div><div class="t cd" style="left:86px">02.02.01</div><div class="t tt" style="left:173px;letter-spacing:0.272px">Устройство монолитных стен цокольного этажа</div><div class="t dt" style="left:550px;width:134px;text-align:center">30.07.2025 09:00</div><div class="t dt" style="left:685px;width:126px;text-align:center">31.07.2025 18:00</div><div class="t dt" style="left:811px;width:95px;text-align:right">100</div></div>
<div class="gr" style="top:507px;height:21px;overflow:hidden"><div class="rn">17</div><div class="abs" style="left:22px;top:0;width:10px;height:23px;background:#17375f"></div><div class="abs" style="left:32px;top:0;width:10px;height:23px;background:#1d4679"></div><div class="abs" style="left:42px;top:0;width:10px;height:23px;background:#22579a"></div><div class="abs" style="left:52px;top:0;width:10px;height:23px;background:#2768b7"></div><div class="abs" style="left:62px;top:0;width:857px;height:23px;background:#fff"></div><div class="abs" style="left:62px;top:22px;width:849px;height:0;border-bottom:1px dashed #b9b9b9"></div><div class="vd" style="left:168px"></div><div class="vd" style="left:550px"></div><div class="vd" style="left:684px"></div><div class="vd" style="left:810px"></div><div class="vd" style="left:910px"></div><div class="cb" style="left:64px"></div><div class="t cd" style="left:86px">02.02.02</div><div class="t tt" style="left:173px;letter-spacing:0.302px">Устройство монолитного перекрытия цокольного этажа</div><div class="t dt" style="left:550px;width:134px;text-align:center">01.08.2025 09:00</div><div class="t dt" style="left:685px;width:126px;text-align:center">05.08.2025 18:00</div><div class="t dt" style="left:811px;width:95px;text-align:right">100</div></div>
<div class="abs" style="left:982px;top:87px;width:936px;height:1px;background:#c4c4cc"></div>
<div class="abs" style="left:982px;top:88px;width:936px;height:51px;background:#fff"></div>
<div class="abs" style="left:982px;top:104px;width:936px;height:1px;background:#d3d3d8"></div>
<div class="abs" style="left:982px;top:120px;width:936px;height:1px;background:#d3d3d8"></div>
<div class="abs" style="left:982px;top:138px;width:936px;height:1px;background:#d3d3d8"></div>
<div class="t" style="left:1412px;top:89px;width:80px;text-align:center;font-size:12.5px;letter-spacing:.3px;line-height:14px;color:#111">2025</div>
<div class="t" style="left:1412px;top:106px;width:80px;text-align:center;font-size:12.5px;letter-spacing:.3px;line-height:14px;color:#111">июль</div>
<div class="abs" style="left:983px;top:89px;width:935px;height:50px;overflow:hidden">
<div class="gd" style="left:-1.20px;top:33px;width:46.16px">10</div>
<div class="gd" style="left:44.96px;top:33px;width:46.16px">11</div>
<div class="gd" style="left:91.12px;top:33px;width:46.16px">12</div>
<div class="gd" style="left:137.28px;top:33px;width:46.16px">13</div>
<div class="gd" style="left:183.44px;top:33px;width:46.16px">14</div>
<div class="gd" style="left:229.60px;top:33px;width:46.16px">15</div>
<div class="gd" style="left:275.76px;top:33px;width:46.16px">16</div>
<div class="gd" style="left:321.92px;top:33px;width:46.16px">17</div>
<div class="gd" style="left:368.08px;top:33px;width:46.16px">18</div>
<div class="gd" style="left:414.24px;top:33px;width:46.16px">19</div>
<div class="gd" style="left:460.40px;top:33px;width:46.16px">20</div>
<div class="gd" style="left:506.56px;top:33px;width:46.16px">21</div>
<div class="gd" style="left:552.72px;top:33px;width:46.16px">22</div>
<div class="gd" style="left:598.88px;top:33px;width:46.16px">23</div>
<div class="gd" style="left:645.04px;top:33px;width:46.16px">24</div>
<div class="gd" style="left:691.20px;top:33px;width:46.16px">25</div>
<div class="gd" style="left:737.36px;top:33px;width:46.16px">26</div>
<div class="gd" style="left:783.52px;top:33px;width:46.16px">27</div>
<div class="gd" style="left:829.68px;top:33px;width:46.16px">28</div>
<div class="gd" style="left:875.84px;top:33px;width:46.16px">29</div>
<div class="gd" style="left:922.00px;top:33px;width:46.16px"></div>
</div>
<svg style="left:983px;top:139px" width="927" height="388" viewBox="983 139 927 388"><defs><clipPath id="gc"><rect x="982" y="139" width="928" height="388"/></clipPath></defs><g clip-path="url(#gc)"><rect x="982" y="254" width="928" height="23" fill="#dce9f8"/><line x1="983" x2="1910" y1="161.5" y2="161.5" stroke="#ececef" stroke-width="1" stroke-dasharray="2.500 3.500"/><line x1="983" x2="1910" y1="184.5" y2="184.5" stroke="#ececef" stroke-width="1" stroke-dasharray="2.500 3.500"/><line x1="983" x2="1910" y1="207.5" y2="207.5" stroke="#ececef" stroke-width="1" stroke-dasharray="2.500 3.500"/><line x1="983" x2="1910" y1="230.5" y2="230.5" stroke="#ececef" stroke-width="1" stroke-dasharray="2.500 3.500"/><line x1="983" x2="1910" y1="253.5" y2="253.5" stroke="#ececef" stroke-width="1" stroke-dasharray="2.500 3.500"/><line x1="983" x2="1910" y1="276.5" y2="276.5" stroke="#ececef" stroke-width="1" stroke-dasharray="2.500 3.500"/><line x1="983" x2="1910" y1="299.5" y2="299.5" stroke="#ececef" stroke-width="1" stroke-dasharray="2.500 3.500"/><line x1="983" x2="1910" y1="322.5" y2="322.5" stroke="#ececef" stroke-width="1" stroke-dasharray="2.500 3.500"/><line x1="983" x2="1910" y1="345.5" y2="345.5" stroke="#ececef" stroke-width="1" stroke-dasharray="2.500 3.500"/><line x1="983" x2="1910" y1="368.5" y2="368.5" stroke="#ececef" stroke-width="1" stroke-dasharray="2.500 3.500"/><line x1="983" x2="1910" y1="391.5" y2="391.5" stroke="#ececef" stroke-width="1" stroke-dasharray="2.500 3.500"/><line x1="983" x2="1910" y1="414.5" y2="414.5" stroke="#ececef" stroke-width="1" stroke-dasharray="2.500 3.500"/><line x1="983" x2="1910" y1="437.5" y2="437.5" stroke="#ececef" stroke-width="1" stroke-dasharray="2.500 3.500"/><line x1="983" x2="1910" y1="460.5" y2="460.5" stroke="#ececef" stroke-width="1" stroke-dasharray="2.500 3.500"/><line x1="983" x2="1910" y1="483.5" y2="483.5" stroke="#ececef" stroke-width="1" stroke-dasharray="2.500 3.500"/><line x1="983" x2="1910" y1="506.5" y2="506.5" stroke="#ececef" stroke-width="1" stroke-dasharray="2.500 3.500"/><line x1="983" x2="1910" y1="529.5" y2="529.5" stroke="#ececef" stroke-width="1" stroke-dasharray="2.500 3.500"/><polygon points="998.5,141.0 2000.0,141.0 2000.0,145.0 1003.0,145.0 998.5,148.5" fill="#d2d2d2"/><polygon points="998.5,150.0 2000.0,150.0 2000.0,154.0 1003.0,154.0 998.5,158.0" fill="#000"/><polygon points="998.5,164.0 2000.0,164.0 2000.0,168.0 1003.0,168.0 998.5,171.5" fill="#d2d2d2"/><polygon points="998.5,173.0 2000.0,173.0 2000.0,177.0 1003.0,177.0 998.5,181.0" fill="#000"/><polygon points="998.5,187.0 1292.8,187.0 1292.8,194.5 1288.3,191.0 1003.0,191.0 998.5,194.5" fill="#d2d2d2"/><polygon points="998.5,196.0 2000.0,196.0 2000.0,200.0 1003.0,200.0 998.5,204.0" fill="#000"/><polygon points="1321.6,302.0 2000.0,302.0 2000.0,306.0 1326.1,306.0 1321.6,309.5" fill="#d2d2d2"/><polygon points="1321.6,311.0 2000.0,311.0 2000.0,315.0 1326.1,315.0 1321.6,319.0" fill="#000"/><polygon points="1321.6,325.0 1892.9,325.0 1892.9,332.5 1888.4,329.0 1326.1,329.0 1321.6,332.5" fill="#d2d2d2"/><polygon points="1321.6,334.0 1892.9,334.0 1892.9,342.0 1888.4,338.0 1326.1,338.0 1321.6,342.0" fill="#000"/><path d="M1107.6 224 V231.5 H1123.1 V247.5 H1136.0" fill="none" stroke="#2a2a2a" stroke-width="1.1"/><polygon points="1137.0,247.5 1129.0,244.0 1129.0,251.0" fill="#000"/><path d="M1200.0 247 V254.5 H1215.5 V270.5 H1228.3" fill="none" stroke="#2a2a2a" stroke-width="1.1"/><polygon points="1229.3,270.5 1221.3,267.0 1221.3,274.0" fill="#000"/><path d="M1292.3 270 V277.5 H1307.8 V362.5 H1320.6" fill="none" stroke="#2a2a2a" stroke-width="1.1"/><polygon points="1321.6,362.5 1313.6,359.0 1313.6,366.0" fill="#000"/><path d="M1384.6 362 V369.5 H1400.1 V385.5 H1413.0" fill="none" stroke="#2a2a2a" stroke-width="1.1"/><polygon points="1414.0,385.5 1406.0,382.0 1406.0,389.0" fill="#000"/><path d="M1476.9 385 V392.5 H1492.4 V408.5 H1505.3" fill="none" stroke="#2a2a2a" stroke-width="1.1"/><polygon points="1506.3,408.5 1498.3,405.0 1498.3,412.0" fill="#000"/><path d="M1569.2 408 V415.5 H1584.7 V431.5 H1597.6" fill="none" stroke="#2a2a2a" stroke-width="1.1"/><polygon points="1598.6,431.5 1590.6,428.0 1590.6,435.0" fill="#000"/><path d="M1661.6 431 V438.5 H1677.1 V454.5 H1689.9" fill="none" stroke="#2a2a2a" stroke-width="1.1"/><polygon points="1690.9,454.5 1682.9,451.0 1682.9,458.0" fill="#000"/><path d="M1892.4 454 V461.5 H1907.9 V500.5 H1914.0" fill="none" stroke="#2a2a2a" stroke-width="1.1"/><rect x="999.0" y="210.5" width="108.6" height="5" fill="#d6d6d6" stroke="#a9a9a9" stroke-width="1"/><rect x="998.5" y="219" width="109.6" height="10" fill="#20c997"/><rect x="998.5" y="219" width="4" height="10" fill="#000"/><rect x="999.0" y="219.5" width="108.6" height="9" fill="none" stroke="#000" stroke-opacity=".22" stroke-width="1"/><rect x="1137.5" y="233.5" width="62.5" height="5" fill="#d6d6d6" stroke="#a9a9a9" stroke-width="1"/><rect x="1137.0" y="242" width="63.5" height="10" fill="#20c997"/><rect x="1137.0" y="242" width="6.3" height="10" fill="#0f72e1"/><rect x="1137.5" y="242.5" width="62.5" height="9" fill="none" stroke="#000" stroke-opacity=".22" stroke-width="1"/><path d="M1138.0 247.5 Q1140.6 252.7 1143.1 247.5 Q1145.7 242.3 1148.2 247.5 Q1150.8 252.7 1153.4 247.5 Q1155.9 242.3 1158.5 247.5 Q1161.0 252.7 1163.6 247.5 Q1166.2 242.3 1168.7 247.5 Q1171.3 252.7 1173.8 247.5 Q1176.4 242.3 1179.0 247.5 Q1181.5 252.7 1184.1 247.5 Q1186.7 242.3 1189.2 247.5 Q1191.8 252.7 1194.3 247.5 Q1196.9 242.3 1199.5 247.5" fill="none" stroke="#fff" stroke-width="1.5"/><path d="M1138.0 237 Q1140.6 240.2 1143.1 237 Q1145.7 233.8 1148.2 237 Q1150.8 240.2 1153.4 237 Q1155.9 233.8 1158.5 237 Q1161.0 240.2 1163.6 237 Q1166.2 233.8 1168.7 237 Q1171.3 240.2 1173.8 237 Q1176.4 233.8 1179.0 237 Q1181.5 240.2 1184.1 237 Q1186.7 233.8 1189.2 237 Q1191.8 240.2 1194.3 237 Q1196.9 233.8 1199.5 237" fill="none" stroke="#fff" stroke-width="1.5" stroke-dasharray="3 2"/><rect x="1229.8" y="256.5" width="62.5" height="5" fill="#d6d6d6" stroke="#a9a9a9" stroke-width="1"/><rect x="1229.3" y="265" width="63.5" height="10" fill="#20c997"/><rect x="1229.3" y="265" width="29.8" height="10" fill="#0f72e1"/><rect x="1229.8" y="265.5" width="62.5" height="9" fill="none" stroke="#000" stroke-opacity=".22" stroke-width="1"/><rect x="1322.1" y="348.5" width="62.5" height="5" fill="#d6d6d6" stroke="#a9a9a9" stroke-width="1"/><rect x="1321.6" y="357" width="63.5" height="10" fill="#20c997"/><rect x="1321.6" y="357" width="63.5" height="10" fill="#0f72e1"/><rect x="1322.1" y="357.5" width="62.5" height="9" fill="none" stroke="#000" stroke-opacity=".22" stroke-width="1"/><rect x="1414.5" y="371.5" width="62.5" height="5" fill="#d6d6d6" stroke="#a9a9a9" stroke-width="1"/><rect x="1414.0" y="380" width="63.5" height="10" fill="#20c997"/><rect x="1414.0" y="380" width="63.5" height="10" fill="#0f72e1"/><rect x="1414.5" y="380.5" width="62.5" height="9" fill="none" stroke="#000" stroke-opacity=".22" stroke-width="1"/><rect x="1506.8" y="394.5" width="62.5" height="5" fill="#d6d6d6" stroke="#a9a9a9" stroke-width="1"/><rect x="1506.3" y="403" width="63.5" height="10" fill="#20c997"/><rect x="1506.3" y="403" width="21.6" height="10" fill="#0f72e1"/><rect x="1506.8" y="403.5" width="62.5" height="9" fill="none" stroke="#000" stroke-opacity=".22" stroke-width="1"/><rect x="1599.1" y="417.5" width="62.5" height="5" fill="#d6d6d6" stroke="#a9a9a9" stroke-width="1"/><rect x="1598.6" y="426" width="63.5" height="10" fill="#20c997"/><rect x="1598.6" y="426" width="41.9" height="10" fill="#0f72e1"/><rect x="1599.1" y="426.5" width="62.5" height="9" fill="none" stroke="#000" stroke-opacity=".22" stroke-width="1"/><rect x="1691.4" y="440.5" width="201.0" height="5" fill="#d6d6d6" stroke="#a9a9a9" stroke-width="1"/><rect x="1690.9" y="449" width="202.0" height="10" fill="#20c997"/><rect x="1690.9" y="449" width="202.0" height="10" fill="#0f72e1"/><rect x="1691.4" y="449.5" width="201.0" height="9" fill="none" stroke="#000" stroke-opacity=".22" stroke-width="1"/></g></svg>
<div class="abs" style="left:983px;top:139px;width:927px;height:388px;overflow:hidden"><div class="gl" style="left:145.1px;top:75.5px;letter-spacing:0.195px">Вертикальная планировка территории</div><div class="gl" style="left:237.5px;top:98.5px;letter-spacing:0.184px">Устройство котлована</div><div class="gl" style="left:329.8px;top:121.5px;letter-spacing:0.242px">Устройство песчаного основания</div><div class="gl" style="left:422.1px;top:213.5px;letter-spacing:0.167px">Устройство буронабивных свай захватка 1</div><div class="gl" style="left:514.4px;top:236.5px;letter-spacing:0.186px">Устройство буронабивных свай захватка 2</div><div class="gl" style="left:606.7px;top:259.5px;letter-spacing:0.186px">Устройство буронабивных свай захватка 3</div><div class="gl" style="left:699.1px;top:282.5px;letter-spacing:0.186px">Устройство буронабивных свай захватка 4</div></div>
<div class="abs" style="left:1910px;top:139px;width:8px;height:388px;background:#f4f4f6"></div>
<div class="abs" style="left:1911px;top:139px;width:7px;height:32px;background:#dcdcde;border-radius:4px"></div>
<div class="tab" style="left:83px;letter-spacing:0.422px">Карточка работы</div>
<div class="tab" style="left:295px;letter-spacing:0.285px">Связи работы</div>
<div class="tab" style="left:481px;letter-spacing:0.365px">Связанные графики</div>
<div class="tab" style="left:718px;letter-spacing:0.595px">Справочники</div>
<div class="tab" style="left:900px;letter-spacing:0.372px">Суточное планирование</div>
<div class="tab" style="left:1171px;letter-spacing:0.351px;color:#2f86de">Чек-листы</div>
<div class="tab" style="left:1330px;letter-spacing:0.544px">Фото / Документация</div>
<div class="tab" style="left:1579px;letter-spacing:0.389px">Запросы и поручения</div>
<div class="tab" style="left:1829px;letter-spacing:-0.139px">Табели</div>
<div class="abs" style="left:1134px;top:575px;width:158px;height:2px;background:#1976d2"></div>
<div class="btn" style="left:53px;width:145px;letter-spacing:0.542px;text-indent:0.542px">Создать чек-лист</div>
<div class="btn" style="left:206px;width:168px;letter-spacing:0.415px;text-indent:0.415px">Выбрать из шаблона</div>
<div class="hl" style="left:45px;top:644px;width:938px"></div>
<div class="hl" style="left:45px;top:693px;width:938px"></div>
<div class="hl" style="left:45px;top:742px;width:938px"></div>
<div class="abs" style="left:983px;top:585px;width:1px;height:323px;background:#c6c6cc"></div>
<svg class="ic" style="left:61px;top:657px" width="24" height="24" viewBox="0 0 24 24" ><rect x="1" y="1" width="22" height="22" rx="2.500"/><path d="M6 9.500H18M6 14.500H18"/></svg>
<div class="cli" style="top:659px;color:#222;letter-spacing:0.577px">Чек-лист по устройству песчаного основания</div>
<svg class="gi" style="left:877.8px;top:656.7px" width="19" height="25" viewBox="0 0 19 25" ><path d="M1.500 23.500V3a2 2 0 0 1 2-2H15.500a2 2 0 0 1 2 2V23.500L9.500 18zM9.500 5.700V13.500M5.600 9.600H13.400"/></svg>
<svg class="gi" style="left:931px;top:656px" width="24.00" height="25.00" viewBox="0 0 24 25"><path d="M1.800 5H22.200"/><path d="M5.800 4.600c.800-2.400 2.200-3.600 3.800-3.600h4.800c1.600 0 3 1.200 3.800 3.600z" fill="#686868" stroke="none"/><path d="M4.800 8.700V21a2.500 2.500 0 0 0 2.500 2.500H16.700a2.500 2.500 0 0 0 2.500-2.500V8.700"/></svg>
<svg class="ic" style="left:61px;top:706px" width="24" height="24" viewBox="0 0 24 24" ><rect x="1" y="1" width="22" height="22" rx="2.500"/><path d="M9.500 7L15 12L9.500 17"/></svg>
<div class="cli" style="top:708px;color:#222;letter-spacing:0.49px">Чек-лист по устройству фундаментной плиты</div>
<svg class="gi" style="left:877.8px;top:705.7px" width="19" height="25" viewBox="0 0 19 25" ><path d="M1.500 23.500V3a2 2 0 0 1 2-2H15.500a2 2 0 0 1 2 2V23.500L9.500 18zM9.500 5.700V13.500M5.600 9.600H13.400"/></svg>
<svg class="gi" style="left:931px;top:705px" width="24.00" height="25.00" viewBox="0 0 24 25"><path d="M1.800 5H22.200"/><path d="M5.800 4.600c.800-2.400 2.200-3.600 3.800-3.600h4.800c1.600 0 3 1.200 3.800 3.600z" fill="#686868" stroke="none"/><path d="M4.800 8.700V21a2.500 2.500 0 0 0 2.500 2.500H16.700a2.500 2.500 0 0 0 2.500-2.500V8.700"/></svg>
<svg class="ic" style="left:61px;top:755px" width="24" height="24" viewBox="0 0 24 24" ><rect x="1" y="1" width="22" height="22" rx="2.500"/><path d="M7 14.500L12 9.500L17 14.500"/></svg>
<div class="cli" style="top:757px;color:#2f86de;letter-spacing:0.585px">Контроль выполнения работ</div>
<svg class="gi" style="left:877.8px;top:754.7px" width="19" height="25" viewBox="0 0 19 25" ><path d="M1.500 23.500V3a2 2 0 0 1 2-2H15.500a2 2 0 0 1 2 2V23.500L9.500 18zM9.500 5.700V13.500M5.600 9.600H13.400"/></svg>
<svg class="gi" style="left:931px;top:754px" width="24.00" height="25.00" viewBox="0 0 24 25"><path d="M1.800 5H22.200"/><path d="M5.800 4.600c.800-2.400 2.200-3.600 3.800-3.600h4.800c1.600 0 3 1.200 3.800 3.600z" fill="#686868" stroke="none"/><path d="M4.800 8.700V21a2.500 2.500 0 0 0 2.500 2.500H16.700a2.500 2.500 0 0 0 2.500-2.500V8.700"/></svg>
<div class="t" style="left:992px;top:601px;font-size:23px;letter-spacing:0.709px;line-height:28px;color:#1c1c1c;transform:scaleX(1.06);transform-origin:0 0">Контроль выполнения работ</div>
<div class="t" style="left:1806px;top:601px;font-size:23px;letter-spacing:0.226px;line-height:28px;color:#1c1c1c;transform:scaleX(1.05);transform-origin:0 0">3/5 (47%)</div>
<div class="abs" style="left:984px;top:707px;width:932px;height:31px;background:#f8f8f9"></div>
<div class="abs" style="left:984px;top:769px;width:932px;height:31px;background:#f8f8f9"></div>
<div class="hl" style="left:984px;top:644px;width:933px;background:#c6c6cc"></div>
<div class="hl" style="left:984px;top:675px;width:933px;background:#c6c6cc"></div>
<div class="hl" style="left:984px;top:706px;width:933px;background:#c6c6cc"></div>
<div class="hl" style="left:984px;top:737px;width:933px;background:#c6c6cc"></div>
<div class="hl" style="left:984px;top:768px;width:933px;background:#c6c6cc"></div>
<div class="hl" style="left:984px;top:799px;width:933px;background:#c6c6cc"></div>
<div class="hl" style="left:984px;top:830px;width:933px;background:#c6c6cc"></div>
<div class="abs" style="left:1043px;top:645px;width:1px;height:185px;background:#c6c6cc"></div>
<div class="abs" style="left:1756px;top:645px;width:1px;height:185px;background:#c6c6cc"></div>
<div class="abs" style="left:1836px;top:645px;width:1px;height:185px;background:#c6c6cc"></div>
<div class="abs" style="left:1916px;top:645px;width:1px;height:185px;background:#c6c6cc"></div>
<div class="cth" style="left:1044px;top:645px;width:712px">Наименование</div>
<div class="cth" style="left:1757px;top:645px;width:79px">Вес</div>
<div class="cth" style="left:1837px;top:645px;width:79px">Действия</div>
<svg style="left:1004px;top:650px" width="20" height="20" viewBox="0 0 20 20"><path d="M10 0.500V19.500M0.500 10H19.500" stroke="#333" stroke-width="1.600" fill="none" stroke-linecap="round"/></svg>
<div class="abs" style="left:1006px;top:683px;width:16px;height:16px;background:#1976d2;border-radius:2px"></div>
<svg style="left:1006px;top:683px" width="16" height="16" viewBox="0 0 16 16"><path d="M3 8.200L6.500 11.700L13 4.700" fill="none" stroke="#fff" stroke-width="1.900"/></svg>
<div class="ct" style="left:1048px;top:676px;letter-spacing:0.301px;text-decoration:line-through">Основание подготовлено и принято по акту</div>
<div class="ct" style="left:1761px;top:676px">2</div>
<svg class="gi2" style="left:1846px;top:682.5px" width="22" height="16" viewBox="0 0 22 16" stroke-width="2"><path d="M2 1.400H12.300M6 8.300H16M9.500 15H20"/></svg>
<svg class="gi2" style="left:1879.1px;top:679.7px" width="20.16" height="21.00" viewBox="0 0 24 25"><path d="M1.800 5H22.200"/><path d="M5.800 4.600c.800-2.400 2.200-3.600 3.800-3.600h4.800c1.600 0 3 1.200 3.800 3.600z" fill="#4a4a4a" stroke="none"/><path d="M4.800 8.700V21a2.500 2.500 0 0 0 2.500 2.500H16.700a2.500 2.500 0 0 0 2.500-2.500V8.700"/></svg>
<div class="abs" style="left:1006px;top:714px;width:16px;height:16px;background:#1976d2;border-radius:2px"></div>
<svg style="left:1006px;top:714px" width="16" height="16" viewBox="0 0 16 16"><path d="M3 8.200L6.500 11.700L13 4.700" fill="none" stroke="#fff" stroke-width="1.900"/></svg>
<div class="ct" style="left:1048px;top:707px;letter-spacing:0.289px;text-decoration:line-through">Песок доставлен, паспортизирован и складирован</div>
<div class="ct" style="left:1761px;top:707px">1</div>
<svg class="gi2" style="left:1846px;top:713.5px" width="22" height="16" viewBox="0 0 22 16" stroke-width="2"><path d="M2 1.400H12.300M6 8.300H16M9.500 15H20"/></svg>
<svg class="gi2" style="left:1879.1px;top:710.7px" width="20.16" height="21.00" viewBox="0 0 24 25"><path d="M1.800 5H22.200"/><path d="M5.800 4.600c.800-2.400 2.200-3.600 3.800-3.600h4.800c1.600 0 3 1.200 3.800 3.600z" fill="#4a4a4a" stroke="none"/><path d="M4.800 8.700V21a2.500 2.500 0 0 0 2.500 2.500H16.700a2.500 2.500 0 0 0 2.500-2.500V8.700"/></svg>
<div class="abs" style="left:1006px;top:745px;width:16px;height:16px;background:#1976d2;border-radius:2px"></div>
<svg style="left:1006px;top:745px" width="16" height="16" viewBox="0 0 16 16"><path d="M3 8.200L6.500 11.700L13 4.700" fill="none" stroke="#fff" stroke-width="1.900"/></svg>
<div class="ct" style="left:1048px;top:738px;letter-spacing:0.221px;text-decoration:line-through">Первый слой уплотнен и прошел испытания</div>
<div class="ct" style="left:1761px;top:738px">1.5</div>
<svg class="gi2" style="left:1846px;top:744.5px" width="22" height="16" viewBox="0 0 22 16" stroke-width="2"><path d="M2 1.400H12.300M6 8.300H16M9.500 15H20"/></svg>
<svg class="gi2" style="left:1879.1px;top:741.7px" width="20.16" height="21.00" viewBox="0 0 24 25"><path d="M1.800 5H22.200"/><path d="M5.800 4.600c.800-2.400 2.200-3.600 3.800-3.600h4.800c1.600 0 3 1.200 3.800 3.600z" fill="#4a4a4a" stroke="none"/><path d="M4.800 8.700V21a2.500 2.500 0 0 0 2.500 2.500H16.700a2.500 2.500 0 0 0 2.500-2.500V8.700"/></svg>
<div class="abs" style="left:1006px;top:776px;width:16px;height:16px;background:#fff;border:1.500px solid #8a8a8a;border-radius:2px"></div>
<div class="ct" style="left:1048px;top:769px;letter-spacing:0.215px">Первый слой отсыпан и разровнен</div>
<div class="ct" style="left:1761px;top:769px">3</div>
<svg class="gi2" style="left:1846px;top:775.5px" width="22" height="16" viewBox="0 0 22 16" stroke-width="2"><path d="M2 1.400H12.300M6 8.300H16M9.500 15H20"/></svg>
<svg class="gi2" style="left:1879.1px;top:772.7px" width="20.16" height="21.00" viewBox="0 0 24 25"><path d="M1.800 5H22.200"/><path d="M5.800 4.600c.800-2.400 2.200-3.600 3.800-3.600h4.800c1.600 0 3 1.200 3.800 3.600z" fill="#4a4a4a" stroke="none"/><path d="M4.800 8.700V21a2.500 2.500 0 0 0 2.500 2.500H16.700a2.500 2.500 0 0 0 2.500-2.500V8.700"/></svg>
<div class="abs" style="left:1006px;top:807px;width:16px;height:16px;background:#fff;border:1.500px solid #8a8a8a;border-radius:2px"></div>
<div class="ct" style="left:1048px;top:800px;letter-spacing:0.248px">Второй слой отсыпан, разровнен и уплотнен</div>
<div class="ct" style="left:1761px;top:800px">2</div>
<svg class="gi2" style="left:1846px;top:806.5px" width="22" height="16" viewBox="0 0 22 16" stroke-width="2"><path d="M2 1.400H12.300M6 8.300H16M9.500 15H20"/></svg>
<svg class="gi2" style="left:1879.1px;top:803.7px" width="20.16" height="21.00" viewBox="0 0 24 25"><path d="M1.800 5H22.200"/><path d="M5.800 4.600c.800-2.400 2.200-3.600 3.800-3.600h4.800c1.600 0 3 1.200 3.800 3.600z" fill="#4a4a4a" stroke="none"/><path d="M4.800 8.700V21a2.500 2.500 0 0 0 2.500 2.500H16.700a2.500 2.500 0 0 0 2.500-2.500V8.700"/></svg>
<svg style="left:0;top:0" width="1918" height="908" viewBox="0 0 1918 908"><path d="M72.600 853V794" stroke="#000" stroke-width="2.900"/><polygon points="72.600,784 66.800,795.800 78.400,795.800" fill="#000"/><ellipse cx="73.8" cy="869.4" rx="15.600" ry="17.700" fill="#fff" stroke="#000" stroke-width="3.200"/><text x="73.8" y="875.6" text-anchor="middle" font-family="Liberation Sans" font-size="20" fill="#000">1</text><path d="M1027 265.500H965" stroke="#000" stroke-width="2.900"/><polygon points="955,265.500 966.800,259.600 966.800,271.400" fill="#000"/><ellipse cx="1042" cy="265.5" rx="15.600" ry="17.700" fill="#fff" stroke="#000" stroke-width="3.200"/><text x="1042" y="271.7" text-anchor="middle" font-family="Liberation Sans" font-size="20" fill="#000">2</text><path d="M1735 615.500H1793" stroke="#000" stroke-width="2.900"/><polygon points="1803.200,615.500 1791.200,609.600 1791.200,621.400" fill="#000"/><ellipse cx="1719.4" cy="615.4" rx="15.600" ry="17.700" fill="#fff" stroke="#000" stroke-width="3.200"/><text x="1719.4" y="621.6" text-anchor="middle" font-family="Liberation Sans" font-size="20" fill="#000">3</text></svg>
</body></html>
